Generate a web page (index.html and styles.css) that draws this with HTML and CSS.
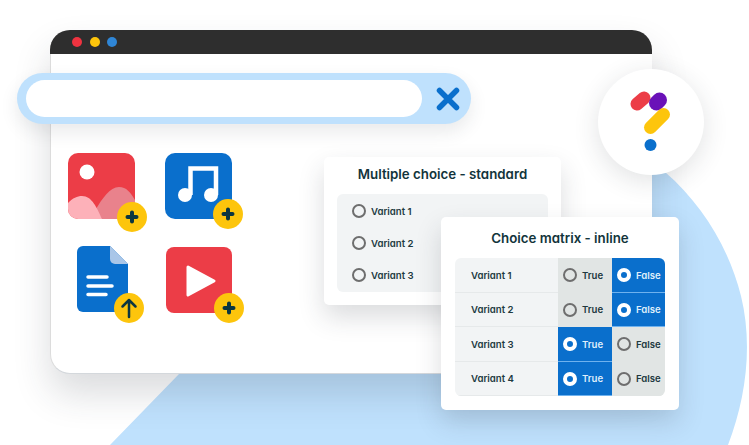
FILE: index.html
```html
<!DOCTYPE html>
<html lang="en">
<head>
    <meta charset="UTF-8">
    <title>Question types</title>
    <link rel="stylesheet" href="styles.css">
</head>
<body>
    <div class="stage">
        <svg class="blob" width="749" height="445" viewBox="0 0 749 445">
            <path d="M179 374L110 445H728C746 398 753 345 741 296C729 248 702 204 665 172H640V374Z" fill="#bfe1fd"/>
        </svg>

        <div class="browser">
            <div class="titlebar">
                <span class="dot dot-red"></span>
                <span class="dot dot-yellow"></span>
                <span class="dot dot-blue"></span>
            </div>
            <div class="icon-grid">
                <svg width="80" height="80" viewBox="0 0 80 80">
                    <defs><clipPath id="imgclip"><rect width="67" height="66" rx="10"/></clipPath></defs>
                    <rect width="67" height="66" rx="10" fill="#ec3d47"/>
                    <g clip-path="url(#imgclip)">
                        <circle cx="19" cy="19" r="7.5" fill="#fff"/>
                        <path d="M28 66V56C34 46 42 34 51 34C60 34 64 42 70 52V66Z" fill="#e9828c"/>
                        <path d="M0 50C5 45 9 43 14 43C24 43 29 55 34 66H0Z" fill="#fdb1b9"/>
                    </g>
                    <circle cx="64" cy="64" r="15" fill="#fdc50c"/>
                    <path d="M64 59.500V68.500M59.500 64H68.500" stroke="#0b3640" stroke-width="4" stroke-linecap="round"/>
                </svg>
                <svg width="80" height="80" viewBox="0 0 80 80">
                    <rect width="67" height="66" rx="10" fill="#0a6fcc"/>
                    <circle cx="20" cy="42" r="7" fill="#fff"/>
                    <circle cx="46" cy="42" r="7" fill="#fff"/>
                    <path d="M25.500 42V15.500H51V42" fill="none" stroke="#fff" stroke-width="4.500"/>
                    <circle cx="63" cy="61" r="15" fill="#fdc50c"/>
                    <path d="M63 56.500V65.500M58.500 61H67.500" stroke="#0b3640" stroke-width="4" stroke-linecap="round"/>
                </svg>
                <svg width="80" height="80" viewBox="0 0 80 80">
                    <path d="M9 6a6 6 0 0 1 6-6H42L60 18V60a6 6 0 0 1-6 6H15a6 6 0 0 1-6-6Z" fill="#0a6fcc"/>
                    <path d="M42 0L60 18H47a5 5 0 0 1-5-5Z" fill="#a9c6e8"/>
                    <path d="M20 31H39M20 40H44M20 48.500H38" stroke="#fff" stroke-width="3.500" stroke-linecap="round"/>
                    <circle cx="61" cy="62" r="15" fill="#fdc50c"/>
                    <path d="M61 71V54M54.500 60.500L61 54L67.500 60.500" fill="none" stroke="#0b3640" stroke-width="2.500" stroke-linecap="round" stroke-linejoin="round"/>
                </svg>
                <svg width="80" height="80" viewBox="0 0 80 80">
                    <rect x="1" y="1" width="66" height="66" rx="8" fill="#ec3d47"/>
                    <path d="M23 21L49 35L23 49Z" fill="#fff" stroke="#fff" stroke-width="3" stroke-linejoin="round"/>
                    <circle cx="64" cy="62" r="15" fill="#fdc50c"/>
                    <path d="M64 57.500V66.500M59.500 62H68.500" stroke="#0b3640" stroke-width="4" stroke-linecap="round"/>
                </svg>
            </div>
        </div>

        <div class="searchbar">
            <div class="search-input"></div>
            <svg width="26" height="26" viewBox="0 0 26 26">
                <path d="M4.500 4.500L21.500 21.500M21.500 4.500L4.500 21.500" stroke="#0a6fcc" stroke-width="5.500" stroke-linecap="round"/>
            </svg>
        </div>

        <div class="logo">
            <svg width="60" height="64" viewBox="0 0 60 64">
                <path d="M16 14L23 8" stroke="#ec3d47" stroke-width="13" stroke-linecap="round"/>
                <path d="M35.500 13L38.500 10" stroke="#6a11b8" stroke-width="15" stroke-linecap="round"/>
                <path d="M29.500 37.500L42.500 24.500" stroke="#fdc50c" stroke-width="13" stroke-linecap="round"/>
                <circle cx="29.500" cy="55" r="6" fill="#0a6fcc"/>
            </svg>
        </div>

        <div class="card card-standard">
            <h2 class="card-title">Multiple choice - standard</h2>
            <div class="option-list">
                <div class="option"><span class="radio"></span>Variant 1</div>
                <div class="option"><span class="radio"></span>Variant 2</div>
                <div class="option"><span class="radio"></span>Variant 3</div>
            </div>
        </div>

        <div class="card card-matrix">
            <h2 class="card-title">Choice matrix - inline</h2>
            <div class="matrix">
                <div class="cell cell-label">Variant 1</div>
                <div class="cell cell-off"><span class="radio"></span>True</div>
                <div class="cell cell-on"><span class="radio radio-on"></span>False</div>

                <div class="cell cell-label">Variant 2</div>
                <div class="cell cell-off"><span class="radio"></span>True</div>
                <div class="cell cell-on"><span class="radio radio-on"></span>False</div>

                <div class="cell cell-label">Variant 3</div>
                <div class="cell cell-on"><span class="radio radio-on"></span>True</div>
                <div class="cell cell-off"><span class="radio"></span>False</div>

                <div class="cell cell-label">Variant 4</div>
                <div class="cell cell-on"><span class="radio radio-on"></span>True</div>
                <div class="cell cell-off"><span class="radio"></span>False</div>
            </div>
        </div>
    </div>
</body>
</html>
```

FILE: styles.css
```css
* {
    margin: 0;
    padding: 0;
    box-sizing: border-box;
    font-family: Inter, 'Liberation Sans', sans-serif;
    font-feature-settings: "cv11";
}

html, body {
    width: 749px;
    height: 445px;
    overflow: hidden;
    background: #fff;
}

.stage {
    position: relative;
    width: 749px;
    height: 445px;
    overflow: hidden;
}

.blob {
    position: absolute;
    left: 0;
    top: 0;
}

.browser {
    position: absolute;
    left: 50px;
    top: 30px;
    width: 602px;
    height: 344px;
    background: #fff;
    border-radius: 20px;
    border-left: 1px solid #dcdcdc;
    border-bottom: 1px solid #d4d8dc;
    box-shadow: 0 20px 36px rgba(40, 50, 60, 0.17);
}

.titlebar {
    display: flex;
    align-items: center;
    gap: 7.500px;
    height: 24px;
    padding-left: 22px;
    margin-left: -1px;
    background: #2e2e2e;
    border-radius: 20px 20px 0 0;
}

.dot {
    width: 10px;
    height: 10px;
    border-radius: 50%;
}

.dot-red { background: #ef3340; }
.dot-yellow { background: #fdc50c; }
.dot-blue { background: #2f86d6; }

.icon-grid {
    display: grid;
    grid-template-columns: 80px 80px;
    grid-auto-rows: 80px;
    column-gap: 17px;
    row-gap: 13px;
    margin: 99px 0 0 17px;
}

.icon-grid svg {
    overflow: visible;
}

.searchbar {
    position: absolute;
    left: 17px;
    top: 73px;
    width: 454px;
    height: 51px;
    display: flex;
    align-items: center;
    gap: 13px;
    padding-left: 9px;
    background: #bfe1fd;
    border-radius: 26px;
    box-shadow: 0 8px 18px rgba(40, 50, 60, 0.1);
}

.search-input {
    width: 396px;
    height: 37px;
    background: #fff;
    border-radius: 19px;
}

.logo {
    position: absolute;
    left: 598px;
    top: 69px;
    width: 106px;
    height: 106px;
    display: flex;
    align-items: center;
    justify-content: center;
    background: #fff;
    border-radius: 50%;
    box-shadow: 0 6px 26px rgba(40, 50, 60, 0.14);
}

.card {
    position: absolute;
    background: #fff;
    border-radius: 5px;
    box-shadow: 0 12px 26px rgba(40, 50, 60, 0.17);
}

.card-title {
    font-size: 13.300px;
    font-weight: 600;
    line-height: 16px;
    text-align: center;
    color: #12343b;
}

.card-standard {
    left: 324px;
    top: 157px;
    width: 237px;
    height: 148px;
    padding: 9px 13px 0;
}

.option-list {
    display: flex;
    flex-direction: column;
    justify-content: space-between;
    height: 98px;
    margin-top: 12px;
    padding: 9px 0 9px 15px;
    background: #f2f4f5;
    border-radius: 6px;
}

.option {
    display: flex;
    align-items: center;
    gap: 5px;
    height: 16px;
    font-size: 9.600px;
    font-weight: 600;
    color: #21393f;
}

.radio {
    flex: none;
    width: 14px;
    height: 14px;
    border: 2.300px solid #6e6e6e;
    border-radius: 50%;
}

.radio-on {
    border: 4.500px solid #fff;
    background: #0a6fcc;
}

.card-matrix {
    left: 441px;
    top: 217px;
    width: 238px;
    height: 193px;
    padding: 13px 14px 0;
}

.matrix {
    display: grid;
    grid-template-columns: 103px 54px 53px;
    grid-auto-rows: 34.500px;
    margin-top: 12px;
    border-radius: 6px;
    overflow: hidden;
}

.cell {
    display: flex;
    align-items: center;
    gap: 5px;
    padding: 1px 0 0 5px;
    font-size: 9.600px;
    font-weight: 600;
    color: #21393f;
    border-bottom: 1px solid #f2f4f5;
}

.cell-label {
    padding-left: 16px;
    background: #f2f4f5;
    border-bottom-color: #e6e9ea;
}

.cell-off {
    background: #e1e5e4;
    border-bottom-color: #e1e5e4;
}

.cell-on {
    background: #0a6fcc;
    color: #dfeefb;
    border-bottom-color: #6fb2ee;
}
```
